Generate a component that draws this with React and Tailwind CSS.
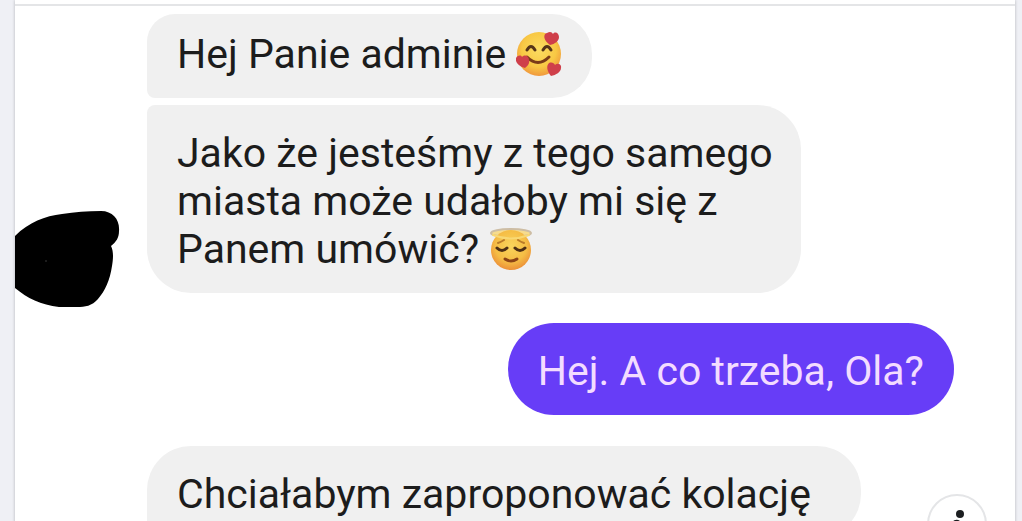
import React from "react";

const HeartsEmoji = () => {
    return (
        <svg viewBox="0 0 48 46" className="inline-block w-12 h-[46px] align-[-9px]" role="img" aria-label="smiling face with hearts">
            <defs>
                <radialGradient id="heartsFace" cx="50%" cy="40%" r="60%">
                    <stop offset="0" stopColor="#fbdc62" />
                    <stop offset="0.65" stopColor="#f8c844" />
                    <stop offset="1" stopColor="#f0983c" />
                </radialGradient>
            </defs>
            <circle cx="23" cy="23" r="22" fill="url(#heartsFace)" />
            <path d="M11 19 Q15 12 19 19 M27 19 Q31 12 35 19" fill="none" stroke="#563418" strokeWidth="3" strokeLinecap="round" />
            <path d="M11 26 Q22 37 33 26" fill="none" stroke="#7a3b18" strokeWidth="3" strokeLinecap="round" />
            <g fill="#cf3f4a">
                <path d="M34 14 C27 9 27 3 31 2 C34 0 36 1 37 3 C39 0 43 2 43 6 C43 10 39 13 34 14Z" />
                <path d="M9 37 C2 35 -1 31 0 27 C2 24 5 24 6 26 C9 23 13 25 13 29 C14 32 12 35 9 37Z" />
                <path d="M35 45 C31 40 30 35 33 32 C36 31 38 32 39 34 C42 31 46 34 45 37 C45 41 40 44 35 45Z" />
            </g>
        </svg>
    )
}

const HaloEmoji = () => {
    return (
        <svg viewBox="0 0 44 44" className="inline-block size-11 align-[-8px]" role="img" aria-label="smiling face with halo">
            <defs>
                <radialGradient id="haloFace" cx="50%" cy="40%" r="60%">
                    <stop offset="0" stopColor="#f9d45c" />
                    <stop offset="0.65" stopColor="#f5bd45" />
                    <stop offset="1" stopColor="#ec9038" />
                </radialGradient>
            </defs>
            <ellipse cx="22" cy="6" rx="20" ry="4" fill="#f7dc8c" stroke="#cdbda4" strokeWidth="2" />
            <circle cx="22" cy="23" r="20" fill="url(#haloFace)" />
            <path d="M4 8 Q22 15 40 8" fill="none" stroke="#f8d873" strokeWidth="2" strokeLinecap="round" />
            <path d="M9 16 Q12 15 15 13 M29 13 Q32 15 35 16" fill="none" stroke="#b97a28" strokeWidth="2" strokeLinecap="round" />
            <path d="M8 21 Q13 26 18 21 M26 21 Q31 26 36 21" fill="none" stroke="#4e2f14" strokeWidth="3" strokeLinecap="round" />
            <path d="M16 32 Q22 36 28 32" fill="none" stroke="#8c4316" strokeWidth="3" strokeLinecap="round" />
        </svg>
    )
}

const Bubble = ({ className, children }) => {
    return (
        <p className={`w-fit pl-[30px] pb-5 text-[41px] leading-12 ${className}`}>
            {children}
        </p>
    )
}

const HiddenAvatar = () => {
    return (
        <svg viewBox="0 0 105 98" className="w-[105px] h-[98px] -mb-[15px]" aria-hidden="true">
            <path d="M0 26 C14 12 30 6 47 4 C60 2 72 1 86 1 C98 1 105 10 104 21 C104 28 101 32 96 36 C99 42 98 50 97 56 C95 70 90 81 83 89 C77 96 70 97 62 97 L44 97 C26 95 12 88 0 78Z" fill="#000" />
            <circle cx="31" cy="51" r="1" fill="#262626" />
        </svg>
    )
}

export default function App() {
    return (
        <div className="h-screen overflow-hidden bg-[#eff0f5] pl-[15px] pr-[7px] font-[Roboto,sans-serif] text-[#1c1c1c]">
            <main className="min-h-full bg-white pt-1 shadow-[0_0_3px_rgba(0,0,0,0.25)]">
                <div className="border-t-2 border-[#e4e5e7]">
                    <div className="pt-2 pr-[61px]">
                        <div className="flex">
                            <div className="w-[132px] shrink-0 flex items-end">
                                <HiddenAvatar />
                            </div>
                            <div className="flex flex-col gap-[7px]">
                                <Bubble className="bg-[#f0f0f0] pt-4 pr-7 rounded-tl-[28px] rounded-r-[40px] rounded-bl-lg">
                                    Hej Panie adminie <HeartsEmoji />
                                </Bubble>
                                <Bubble className="max-w-[654px] bg-[#f0f0f0] pt-6 pr-5 rounded-tl-lg rounded-r-[44px] rounded-bl-[44px]">
                                    Jako że jesteśmy z tego samego miasta może udałoby mi się z Panem umówić? <HaloEmoji />
                                </Bubble>
                            </div>
                        </div>
                        <Bubble className="mt-[30px] ml-auto bg-[#673df7] pt-6 pr-[30px] rounded-full text-[#f3dcff]">
                            Hej. A co trzeba, Ola?
                        </Bubble>
                        <Bubble className="mt-[31px] ml-[132px] min-w-[714px] bg-[#f0f0f0] pt-6 pr-[30px] rounded-t-[44px] rounded-br-[44px] rounded-bl-lg">
                            Chciałabym zaproponować kolację
                        </Bubble>
                    </div>
                </div>
            </main>
            <button
                aria-label="New message"
                className="fixed right-[35px] -bottom-[33px] size-[60px] rounded-full border-2 border-[#e4e5e7] bg-white"
            >
                <svg viewBox="0 0 56 56" className="size-14" fill="#1c1e21" aria-hidden="true">
                    <circle cx="31" cy="18" r="4" />
                    <path d="M23 26 Q27 22 31 25 L29 33 L36 40 L33 43 L24 34Z" />
                </svg>
            </button>
        </div>
    );
}
